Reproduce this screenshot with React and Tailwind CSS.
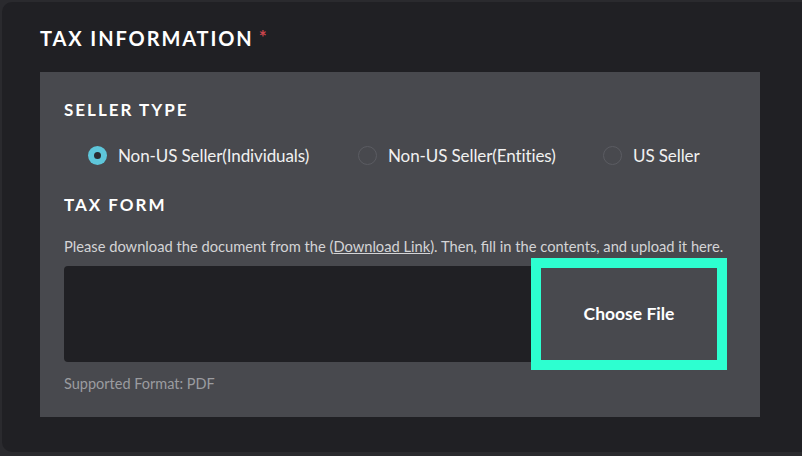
import { useState } from "react";

const SELLER_TYPES = [
  { id: "individual", label: "Non-US Seller(Individuals)", width: "w-[270px]" },
  { id: "entity", label: "Non-US Seller(Entities)", width: "w-[245px]" },
  { id: "us", label: "US Seller", width: "" },
];

function Radio({ checked, label, width, onClick }) {
  return (
    <button onClick={onClick} className={`flex items-center gap-[11px] text-left ${width}`}>
      <span
        className={`w-[19px] h-[19px] shrink-0 rounded-full flex items-center justify-center ${
          checked ? "bg-[#5ec6da]" : "border border-[#5b5c62]"
        }`}
      >
        {checked && <span className="w-[7px] h-[7px] rounded-full bg-[#2a2b30]" />}
      </span>
      <span className="text-[17px] leading-none text-[#f1f1f1] tracking-[-0.1px] whitespace-nowrap">{label}</span>
    </button>
  );
}

export default function App() {
  const [seller, setSeller] = useState("individual");

  return (
    <div className="w-[802px] h-[456px] bg-[#2a2a2e] pt-[2px] pl-[2px] pb-[4px] overflow-hidden font-['Lato',sans-serif]">
      <div className="h-[450px] bg-[#202024] rounded-l-[10px] pt-[26px] pl-[38px]">
        <h2 className="text-[20px] font-bold text-white tracking-[1.9px] flex items-start leading-none">
          TAX INFORMATION<span className="text-[#cc454d] text-[19px] ml-[5px] -mt-[1px]">*</span>
        </h2>

        <div className="mt-[24px] w-[720px] bg-[#48494e] px-[24px] pt-[29px] h-[345px]">
          <h3 className="text-[17px] font-bold text-white tracking-[2px] leading-none">SELLER TYPE</h3>
          <div className="flex mt-[28px] pl-[24px]">
            {SELLER_TYPES.map((s) => (
              <Radio
                key={s.id}
                label={s.label}
                width={s.width}
                checked={seller === s.id}
                onClick={() => setSeller(s.id)}
              />
            ))}
          </div>

          <h3 className="mt-[31px] text-[17px] font-bold text-white tracking-[2px] leading-none">TAX FORM</h3>
          <p className="mt-[26px] text-[14.7px] text-[#d4d4d6] leading-none whitespace-nowrap">
            Please download the document from the (<span className="underline">Download Link</span>). Then, fill in the contents, and upload it here.
          </p>

          <div className="flex items-center mt-[12px]">
            <div className="w-[477px] h-[96px] bg-[#202024] rounded-[4px]" />
            <button className="w-[176px] h-[92px] bg-[#48494e] rounded-none outline-[10px] outline-solid outline-[#2dffd0] text-[17.5px] font-bold text-white">
              Choose File
            </button>
          </div>

          <p className="mt-[15px] text-[14.5px] text-[#9b9ca0] leading-none">Supported Format: PDF</p>
        </div>
      </div>
    </div>
  );
}
